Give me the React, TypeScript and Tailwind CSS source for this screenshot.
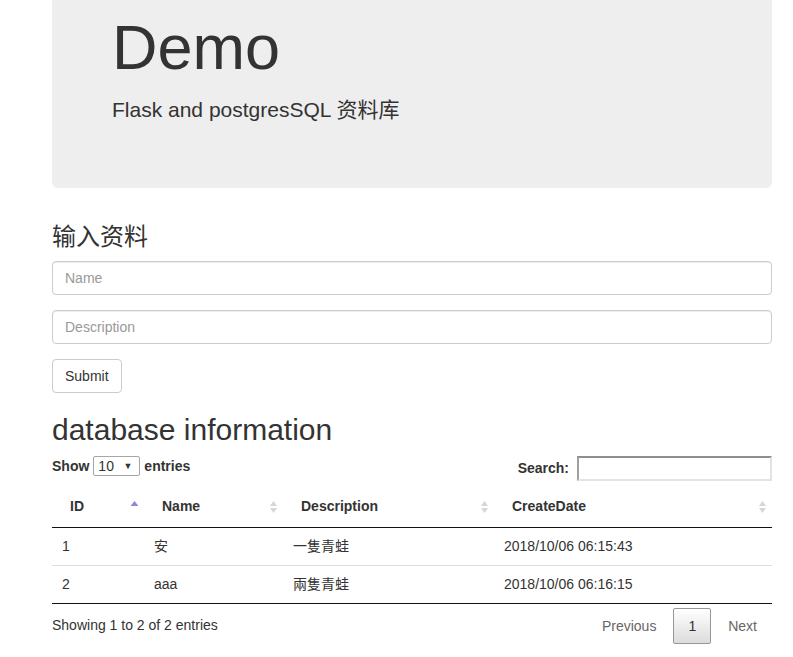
const font = "font-['Liberation_Sans','Noto_Sans_CJK_SC',sans-serif]";

function SortAsc() {
  return (
    <svg width="19" height="19" viewBox="0 0 19 19" className="absolute right-0 top-1/2 -translate-y-1/2">
      <path d="M5.5 8.5 L9.5 3.5 L13.5 8.5 Z" fill="#8a8ad6" />
    </svg>
  );
}

function SortBoth() {
  return (
    <svg width="19" height="19" viewBox="0 0 19 19" className="absolute right-0 top-1/2 -translate-y-1/2">
      <path d="M6 8.5 L9.5 3.5 L13 8.5 Z" fill="#d6d6d6" />
      <path d="M6 10.5 L9.5 15.5 L13 10.5 Z" fill="#d6d6d6" />
    </svg>
  );
}

const rows = [
  { id: "1", name: "安", desc: "一隻青蛙", date: "2018/10/06 06:15:43" },
  { id: "2", name: "aaa", desc: "兩隻青蛙", date: "2018/10/06 06:16:15" },
];

export default function App() {
  return (
    <div className={`${font} min-h-[657px] bg-white text-[14px] text-[#333]`}>
      <div className="ml-[52px] w-[720px]">
        <div className="rounded-b-[6px] bg-[#eeeeee] px-[60px] pt-[13px] pb-[50px]">
          <h1 className="mb-[13px] text-[63px] leading-[69px] font-normal">Demo</h1>
          <p className="text-[21px] leading-[30px] mb-[13px]">Flask and postgresSQL 资料库</p>
        </div>

        <h3 className="mt-[34px] mb-[13px] text-[24px] leading-[26px] font-normal font-['Noto_Sans_CJK_SC',sans-serif] font-light">
          输入资料
        </h3>

        <div className="flex flex-col gap-[15px]">
          <input
            placeholder="Name"
            className="h-[34px] w-full rounded-[4px] border border-[#cccccc] px-[12px] text-[14px] shadow-[inset_0_1px_1px_rgba(0,0,0,0.075)] placeholder:text-[#999]"
          />
          <input
            placeholder="Description"
            className="h-[34px] w-full rounded-[4px] border border-[#cccccc] px-[12px] text-[14px] shadow-[inset_0_1px_1px_rgba(0,0,0,0.075)] placeholder:text-[#999]"
          />
          <div>
            <button className="h-[34px] rounded-[4px] border border-[#cccccc] bg-white px-[12px] text-[14px] text-[#333]">
              Submit
            </button>
          </div>
        </div>

        <h2 className="mt-[20px] mb-[10px] text-[30px] leading-[33px] font-normal">database information</h2>

        <div className="flex items-start justify-between">
          <div className="flex items-center font-bold leading-[20px]">
            Show
            <div className="mx-[4px] flex h-[20px] w-[47px] items-center justify-between rounded-[2px] border border-[#a6a6a6] bg-white pl-[4px] pr-[7px] font-normal">
              <span>10</span>
              <span className="text-[9px] text-[#333]">▼</span>
            </div>
            entries
          </div>
          <div className="flex items-center font-bold">
            Search:
            <div className="ml-[8px] h-[25px] w-[195px] border-2 border-t-[#8f8f8f] border-l-[#a0a0a0] border-r-[#e3e3e3] border-b-[#e3e3e3] bg-white" />
          </div>
        </div>

        <table className="mt-[6px] w-full border-collapse">
          <thead>
            <tr className="border-b border-[#111]">
              <th className="relative h-[40px] w-[92px] px-[18px] text-left font-bold">ID<SortAsc /></th>
              <th className="relative h-[40px] w-[139px] px-[18px] text-left font-bold">Name<SortBoth /></th>
              <th className="relative h-[40px] w-[211px] px-[18px] text-left font-bold">Description<SortBoth /></th>
              <th className="relative h-[40px] px-[18px] text-left font-bold">CreateDate<SortBoth /></th>
            </tr>
          </thead>
          <tbody>
            {rows.map((r, i) => (
              <tr key={r.id} className={i === rows.length - 1 ? "border-b border-[#111]" : "border-b border-[#dddddd]"}>
                <td className="h-[38px] px-[10px]">{r.id}</td>
                <td className="px-[10px]">{r.name}</td>
                <td className="px-[10px] font-['Liberation_Sans','Noto_Sans_CJK_TC',sans-serif]">{r.desc}</td>
                <td className="px-[10px]">{r.date}</td>
              </tr>
            ))}
          </tbody>
        </table>

        <div className="flex items-start justify-between">
          <div className="pt-[11px] leading-[20px]">Showing 1 to 2 of 2 entries</div>
          <div className="flex items-center pt-[4px]">
            <span className="ml-[2px] px-[15px] py-[7px] leading-[20px] text-[#666]">Previous</span>
            <span className="ml-[2px] rounded-[2px] border border-[#979797] bg-[linear-gradient(to_bottom,#ffffff_0%,#dcdcdc_100%)] px-[14px] py-[7px] leading-[20px] text-[#333]">
              1
            </span>
            <span className="ml-[2px] px-[15px] py-[7px] leading-[20px] text-[#666]">Next</span>
          </div>
        </div>
      </div>
    </div>
  );
}
